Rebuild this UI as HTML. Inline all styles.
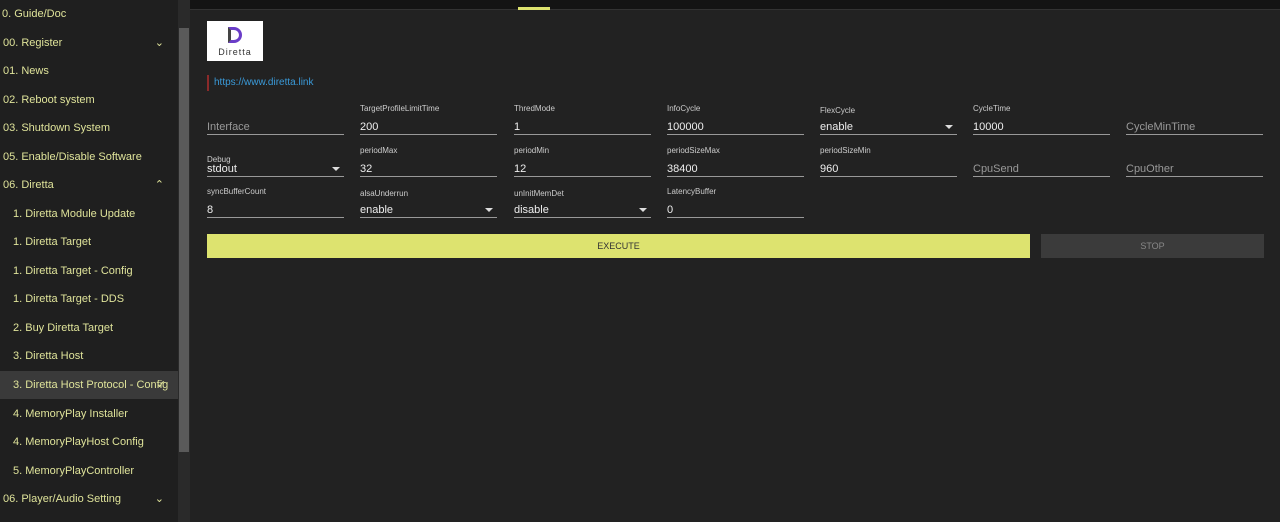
<!DOCTYPE html>
<html><head><style>
*{margin:0;padding:0;box-sizing:border-box}
body{width:1280px;height:522px;background:#222;font-family:"Liberation Sans",sans-serif;overflow:hidden;position:relative}
#side{position:absolute;left:0;top:0;width:178px;height:522px;background:#1f1f1f}
.it{position:absolute;left:0;width:178px;height:28px;line-height:28px;color:#dfe39a;font-size:11px;white-space:nowrap}
.it span{position:absolute;right:14px;top:0;font-size:11px}
#track{position:absolute;left:178px;top:0;width:12px;height:522px;background:#2a2a2a}
#thumb{position:absolute;left:179px;top:28px;width:10px;height:424px;background:#5a5a5a}
#top{position:absolute;left:190px;top:0;width:1090px;height:10px;background:#141414;border-bottom:1px solid #333}
.f{position:absolute;width:137px;height:20px;border-bottom:1px solid #999}
.f .l{position:absolute;left:0;top:-11px;font-size:8px;color:#ccc}
.f .v{position:absolute;left:0;bottom:1px;font-size:11px;color:#eee}
.f .p{position:absolute;left:0;bottom:1px;font-size:11px;color:#999}
.f .a{position:absolute;right:4px;bottom:5px;width:0;height:0;border-left:4px solid transparent;border-right:4px solid transparent;border-top:4px solid #ddd}
</style></head><body>
<div id="side">
<div class="it" style="top:0;left:0;padding-left:2px">0. Guide/Doc</div>
<div class="it" style="top:29px;padding-left:3px">00. Register<span>&#x2304;</span></div>
<div class="it" style="top:57px;padding-left:3px">01. News</div>
<div class="it" style="top:86px;padding-left:3px">02. Reboot system</div>
<div class="it" style="top:114px;padding-left:3px">03. Shutdown System</div>
<div class="it" style="top:143px;padding-left:3px">05. Enable/Disable Software</div>
<div class="it" style="top:171px;padding-left:3px">06. Diretta<span>&#x2303;</span></div>
<div class="it" style="top:200px;padding-left:13px">1. Diretta Module Update</div>
<div class="it" style="top:228px;padding-left:13px">1. Diretta Target</div>
<div class="it" style="top:257px;padding-left:13px">1. Diretta Target - Config</div>
<div class="it" style="top:285px;padding-left:13px">1. Diretta Target - DDS</div>
<div class="it" style="top:314px;padding-left:13px">2. Buy Diretta Target</div>
<div class="it" style="top:342px;padding-left:13px">3. Diretta Host</div>
<div class="it" style="top:371px;padding-left:13px;background:#3a3a3a">3. Diretta Host Protocol - Config<span style="right:12px">&#x2713;</span></div>
<div class="it" style="top:400px;padding-left:13px">4. MemoryPlay Installer</div>
<div class="it" style="top:428px;padding-left:13px">4. MemoryPlayHost Config</div>
<div class="it" style="top:457px;padding-left:13px">5. MemoryPlayController</div>
<div class="it" style="top:485px;padding-left:3px">06. Player/Audio Setting<span>&#x2304;</span></div>
</div>
<div id="track"></div><div id="thumb"></div>
<div id="top"></div>
<div style="position:absolute;left:518px;top:7px;width:32px;height:3px;background:#dde36f"></div>
<div style="position:absolute;left:207px;top:21px;width:56px;height:40px;background:#fff">
<div style="position:absolute;left:21px;top:6px;width:14px;height:16px;border:3px solid #6a3dc8;border-left-color:#444;border-radius:0 8px 8px 0"></div>
<div style="position:absolute;left:0;width:56px;top:26px;text-align:center;font-size:9px;letter-spacing:1px;color:#333">Diretta</div></div>
<div style="position:absolute;left:207px;top:75px;width:2px;height:16px;background:#8b2a2a"></div>
<div style="position:absolute;left:214px;top:77px;font-size:10px;color:#3a9ad9">https://www.diretta.link</div>

<div class="f" style="left:207px;top:115px"><div class="p">Interface</div></div>
<div class="f" style="left:360px;top:115px"><div class="l">TargetProfileLimitTime</div><div class="v">200</div></div>
<div class="f" style="left:514px;top:115px"><div class="l">ThredMode</div><div class="v">1</div></div>
<div class="f" style="left:667px;top:115px"><div class="l">InfoCycle</div><div class="v">100000</div></div>
<div class="f" style="left:820px;top:115px"><div class="l" style="top:-9px">FlexCycle</div><div class="v">enable</div><div class="a"></div></div>
<div class="f" style="left:973px;top:115px"><div class="l">CycleTime</div><div class="v">10000</div></div>
<div class="f" style="left:1126px;top:115px"><div class="p">CycleMinTime</div></div>

<div class="f" style="left:207px;top:157px"><div class="l" style="top:-2px">Debug</div><div class="v">stdout</div><div class="a"></div></div>
<div class="f" style="left:360px;top:157px"><div class="l">periodMax</div><div class="v">32</div></div>
<div class="f" style="left:514px;top:157px"><div class="l">periodMin</div><div class="v">12</div></div>
<div class="f" style="left:667px;top:157px"><div class="l">periodSizeMax</div><div class="v">38400</div></div>
<div class="f" style="left:820px;top:157px"><div class="l">periodSizeMin</div><div class="v">960</div></div>
<div class="f" style="left:973px;top:157px"><div class="p">CpuSend</div></div>
<div class="f" style="left:1126px;top:157px"><div class="p">CpuOther</div></div>

<div class="f" style="left:207px;top:198px"><div class="l">syncBufferCount</div><div class="v">8</div></div>
<div class="f" style="left:360px;top:198px"><div class="l" style="top:-9px">alsaUnderrun</div><div class="v">enable</div><div class="a"></div></div>
<div class="f" style="left:514px;top:198px"><div class="l" style="top:-9px">unInitMemDet</div><div class="v">disable</div><div class="a"></div></div>
<div class="f" style="left:667px;top:198px"><div class="l">LatencyBuffer</div><div class="v">0</div></div>

<div style="position:absolute;left:207px;top:234px;width:823px;height:24px;background:#dde36f;color:#333;font-size:9px;text-align:center;line-height:24px">EXECUTE</div>
<div style="position:absolute;left:1041px;top:234px;width:223px;height:24px;background:#3b3b3b;color:#888;font-size:9px;text-align:center;line-height:24px">STOP</div>
</body></html>
